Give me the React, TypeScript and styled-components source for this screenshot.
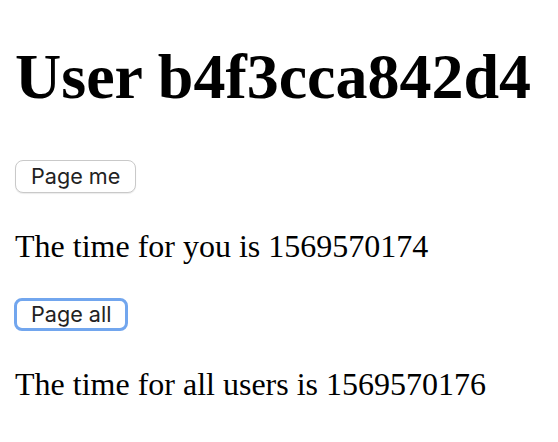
import styled, { createGlobalStyle } from "styled-components";

const GlobalStyle = createGlobalStyle`
  body {
    margin: 0;
    background: #ffffff;
    color: #000000;
    font-family: "Liberation Serif", "Times New Roman", serif;
  }
`;

const Page = styled.main`
  padding: 0 15px;
`;

const Title = styled.h1`
  margin: 40px 0 46px;
  font-size: 64px;
  font-weight: 700;
  line-height: 74px;
  white-space: nowrap;
`;

const ButtonRow = styled.div`
  display: flex;
  align-items: flex-start;
`;

const PageButton = styled.button<{ $focused?: boolean }>`
  box-sizing: border-box;
  height: 33px;
  padding: 0 ${(p) => (p.$focused ? 14 : 15)}px;
  margin-left: ${(p) => (p.$focused ? -1 : 0)}px;
  border: ${(p) => (p.$focused ? "3px solid #72a6ee" : "1px solid #c9c9c9")};
  border-radius: 8px;
  background: #ffffff;
  box-shadow: ${(p) => (p.$focused ? "none" : "0 1px 1px rgba(0, 0, 0, 0.08)")};
  color: #222222;
  font-family: Inter, "Liberation Sans", sans-serif;
  font-size: 21.6px;
  line-height: 1;
  cursor: pointer;
  outline: none;
`;

const Message = styled.p`
  margin: 35px 0 33px;
  font-size: 32px;
  line-height: 37px;
  white-space: nowrap;
`;

const App = () => (
  <>
    <GlobalStyle />
    <Page>
      <Title>User b4f3cca842d4</Title>
      <ButtonRow>
        <PageButton type="button">Page me</PageButton>
      </ButtonRow>
      <Message>The time for you is 1569570174</Message>
      <ButtonRow>
        <PageButton type="button" $focused>
          Page all
        </PageButton>
      </ButtonRow>
      <Message>The time for all users is 1569570176</Message>
    </Page>
  </>
);

export default App;
